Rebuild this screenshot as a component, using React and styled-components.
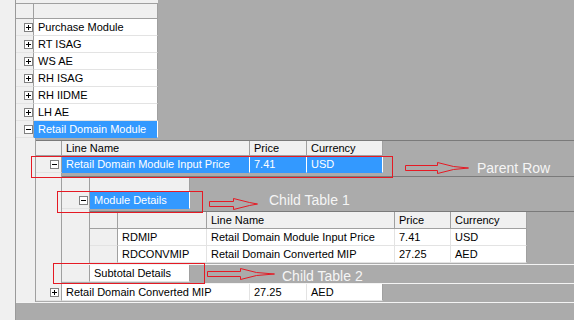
import React from "react";
import styled, { createGlobalStyle } from "styled-components";

const GlobalStyle = createGlobalStyle`
  html, body {
    margin: 0;
    padding: 0;
    background: #f0f0f0;
  }
  body {
    font-family: "Liberation Sans", Arial, sans-serif;
    font-size: 11px;
    color: #000;
  }
`;

const Page = styled.div`
  position: relative;
  width: 574px;
  height: 320px;
  overflow: hidden;
  display: flex;
  background: #f0f0f0;
`;

const Grid = styled.div`
  margin-left: 15px;
  flex: 1;
  display: flex;
  flex-direction: column;
  border-left: 1px solid #9a9a9a;
  background: #ababab;
`;

const RootHead = styled.div`
  width: 142px;
  padding-top: 3px;
  background: #f0f0f0;
`;

const Line = styled.div`
  display: flex;
  flex: none;
  height: ${(p) => p.$h || 17}px;
  box-sizing: border-box;
  border-top: ${(p) => (p.$top ? "1px solid #a0a0a0" : "none")};
`;

const Selector = styled.div`
  flex: none;
  box-sizing: border-box;
  width: ${(p) => p.$w}px;
  display: flex;
  align-items: center;
  justify-content: flex-end;
  padding-right: ${(p) => p.$pad ?? 2}px;
  background: #f0f0f0;
  border-right: 1px solid #a0a0a0;
  border-bottom: 1px solid ${(p) => (p.$head ? "#a0a0a0" : "#e3e3e3")};
`;

const Head = styled.div`
  flex: none;
  box-sizing: border-box;
  width: ${(p) => p.$w}px;
  display: flex;
  align-items: center;
  padding-left: 4px;
  white-space: nowrap;
  overflow: hidden;
  background: #f0f0f0;
  border-right: 1px solid #a0a0a0;
  border-bottom: 1px solid #a0a0a0;
`;

const Cell = styled.div`
  flex: none;
  box-sizing: border-box;
  width: ${(p) => p.$w}px;
  display: flex;
  align-items: center;
  padding-left: 4px;
  white-space: nowrap;
  overflow: hidden;
  background: ${(p) => (p.$sel ? "#3399ff" : "#fff")};
  color: ${(p) => (p.$sel ? "#fff" : "#000")};
  border-right: 1px solid
    ${(p) => (p.$sel ? "#fff" : p.$last ? "#a0a0a0" : "#e3e3e3")};
  border-bottom: 1px solid ${(p) => (p.$sel ? "#3399ff" : "#e3e3e3")};
`;

const Expander = styled.span`
  position: relative;
  flex: none;
  width: 9px;
  height: 9px;
  box-sizing: border-box;
  border: 1px solid #808080;
  background: #fff;

  &::before {
    content: "";
    position: absolute;
    left: 1px;
    top: 3px;
    width: 5px;
    height: 1px;
    background: #000;
  }
  &::after {
    content: "";
    display: ${(p) => (p.$open ? "none" : "block")};
    position: absolute;
    left: 3px;
    top: 1px;
    width: 1px;
    height: 5px;
    background: #000;
  }
`;

const ChildArea = styled.div`
  display: flex;
  flex: none;
  border-bottom: 1px solid #f4f4f4;
`;

const Nested = styled.div`
  display: flex;
  flex: none;
`;

const Indent = styled.div`
  flex: none;
  box-sizing: border-box;
  width: ${(p) => p.$w}px;
  background: #f0f0f0;
  border-right: 1px solid #a0a0a0;
`;

const Band = styled.div`
  flex: 1;
  display: flex;
  flex-direction: column;
  margin-top: ${(p) => p.$gap || 0}px;
  padding-bottom: ${(p) => p.$pb || 0}px;
  border-top: 1px solid #7a7a7a;
`;

const Stack = styled.div`
  flex: 1;
  display: flex;
  flex-direction: column;
`;

const Subtotal = styled.div`
  margin-top: 1px;
  padding-bottom: 1px;
  border-top: 1px solid #f4f4f4;
  border-bottom: 1px solid #f4f4f4;
`;

const Filler = styled.div`
  flex: 1;
`;

const Mark = styled.div`
  position: absolute;
  left: ${(p) => p.$x}px;
  top: ${(p) => p.$y}px;
  width: ${(p) => p.$w}px;
  height: ${(p) => p.$h}px;
  box-sizing: border-box;
  border: 1px solid #e51a24;
`;

const Note = styled.span`
  position: absolute;
  left: ${(p) => p.$x}px;
  top: ${(p) => p.$y}px;
  font-size: 14px;
  line-height: 1;
  color: #f5f5f5;
  white-space: nowrap;
`;

const ArrowSvg = styled.svg`
  position: absolute;
  left: ${(p) => p.$x}px;
  top: ${(p) => p.$y}px;
  overflow: visible;
`;

function Arrow({ x, y, w, shaft }) {
  const s = shaft + 0.5;
  const pts = [
    [0.5, 3.5],
    [s, 3.5],
    [s, 0.5],
    [s + 16, 4.5],
    [w - 0.5, 6],
    [s + 16, 7.5],
    [s, 11.5],
    [s, 8.5],
    [0.5, 8.5],
  ]
    .map((p) => p.join(","))
    .join(" ");
  return (
    <ArrowSvg $x={x} $y={y} width={w} height={12}>
      <polygon points={pts} fill="none" stroke="#e51a24" strokeWidth="1" />
    </ArrowSvg>
  );
}

const modules = ["Purchase Module", "RT ISAG", "WS AE", "RH ISAG", "RH IIDME", "LH AE"];

const details = [
  { code: "RDMIP", name: "Retail Domain Module Input Price", price: "7.41", cur: "USD" },
  { code: "RDCONVMIP", name: "Retail Domain Converted MIP", price: "27.25", cur: "AED" },
];

export default function App() {
  return (
    <>
      <GlobalStyle />
      <Page>
        <Grid>
          <RootHead>
            <Line $h={16} $top>
              <Selector $w={18} $head />
              <Head $w={124} />
            </Line>
          </RootHead>

          {modules.map((name) => (
            <Line key={name}>
              <Selector $w={18} $pad={0}>
                <Expander />
              </Selector>
              <Cell $w={124} $last>
                {name}
              </Cell>
            </Line>
          ))}
          <Line>
            <Selector $w={18} $pad={0}>
              <Expander $open />
            </Selector>
            <Cell $w={124} $sel>
              Retail Domain Module
            </Cell>
          </Line>

          <ChildArea>
            <Indent $w={20} />
            <Band $gap={2} $pb={1}>
              <Line $h={15}>
                <Selector $w={26} $head />
                <Head $w={188}>Line Name</Head>
                <Head $w={57}>Price</Head>
                <Head $w={76}>Currency</Head>
              </Line>
              <Line>
                <Selector $w={26}>
                  <Expander $open />
                </Selector>
                <Cell $w={188} $sel>
                  Retail Domain Module Input Price
                </Cell>
                <Cell $w={57} $sel>
                  7.41
                </Cell>
                <Cell $w={76} $sel>
                  USD
                </Cell>
              </Line>

              <Nested>
                <Indent $w={26} />
                <Stack>
                  <Band $gap={3}>
                    <Line $h={15}>
                      <Selector $w={28} $head />
                      <Head $w={100} />
                    </Line>
                    <Line>
                      <Selector $w={28} $pad={1}>
                        <Expander $open />
                      </Selector>
                      <Cell $w={100} $sel>
                        Module Details
                      </Cell>
                    </Line>
                    <Nested>
                      <Indent $w={28} />
                      <Band $gap={2}>
                        <Line>
                          <Selector $w={28} $head />
                          <Head $w={89} />
                          <Head $w={188}>Line Name</Head>
                          <Head $w={56}>Price</Head>
                          <Head $w={76}>Currency</Head>
                        </Line>
                        {details.map((d) => (
                          <Line key={d.code}>
                            <Selector $w={28} />
                            <Cell $w={89}>{d.code}</Cell>
                            <Cell $w={188}>{d.name}</Cell>
                            <Cell $w={56}>{d.price}</Cell>
                            <Cell $w={76} $last>
                              {d.cur}
                            </Cell>
                          </Line>
                        ))}
                      </Band>
                    </Nested>
                  </Band>
                  <Subtotal>
                    <Line>
                      <Selector $w={28} />
                      <Cell $w={100} $last>
                        Subtotal Details
                      </Cell>
                    </Line>
                  </Subtotal>
                </Stack>
              </Nested>

              <Line>
                <Selector $w={26}>
                  <Expander />
                </Selector>
                <Cell $w={188}>Retail Domain Converted MIP</Cell>
                <Cell $w={57}>27.25</Cell>
                <Cell $w={76} $last>
                  AED
                </Cell>
              </Line>
            </Band>
          </ChildArea>
          <Filler />
        </Grid>

        <Mark $x={31} $y={156} $w={362} $h={22} />
        <Arrow x={405} y={162} w={64} shaft={32} />
        <Note $x={477} $y={161}>Parent Row</Note>

        <Mark $x={57} $y={191} $w={146} $h={22} />
        <Arrow x={209} y={198} w={49} shaft={24} />
        <Note $x={269} $y={193}>Child Table 1</Note>

        <Mark $x={53} $y={263} $w={152} $h={21} />
        <Arrow x={207} y={268} w={68} shaft={33} />
        <Note $x={282} $y={269}>Child Table 2</Note>
      </Page>
    </>
  );
}
